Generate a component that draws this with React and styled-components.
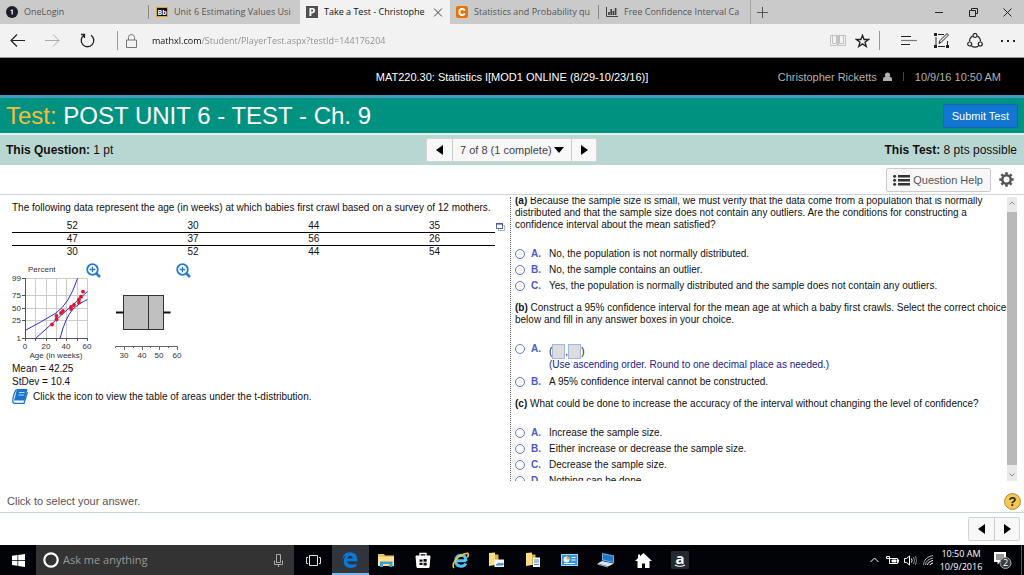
import React, { useState } from "react";
import styled, { createGlobalStyle } from "styled-components";

const GlobalStyle = createGlobalStyle`
  * {
    box-sizing: border-box;
  }

  body {
    margin: 0;
    background: #ffffff;
    color: #111111;
    font-family: "Liberation Sans", Arial, sans-serif;
    font-size: 10px;
    line-height: 12px;
  }

  button, input, select {
    font: inherit;
    color: inherit;
    margin: 0;
    padding: 0;
    border: 0;
    background: none;
    border-radius: 0;
  }

  svg {
    display: block;
    flex: none;
  }
`;

const PageUI = styled.div`
  display: flex;
  flex-direction: column;
  height: 100vh;
  overflow: hidden;
`;

/* ---------- browser ---------- */

const TabBarUI = styled.div`
  display: flex;
  height: 24px;
  flex: none;
  background: #cacaca;
  font-family: "Open Sans", "Noto Sans", sans-serif;
  font-size: 9px;
`;

const TabUI = styled.div`
  display: flex;
  align-items: center;
  flex: 0 1 150px;
  min-width: 0;
  gap: 6px;
  padding: 0 6px;
  background: ${(props) => (props.$active ? "#f2f2f2" : "transparent")};
  color: ${(props) => (props.$active ? "#111111" : "#555555")};
  position: relative;

  &::after {
    content: "";
    display: ${(props) => (props.$divider ? "block" : "none")};
    position: absolute;
    right: 1px;
    top: 5px;
    width: 1px;
    height: 14px;
    background: #888888;
  }
`;

const TabTitleUI = styled.button`
  flex: 1;
  min-width: 0;
  overflow: hidden;
  white-space: nowrap;
  text-align: left;
`;

const PlainButtonUI = styled.button`
  display: flex;
  align-items: center;
  justify-content: center;
`;

const NewTabUI = styled(PlainButtonUI)`
  width: 24px;
  border-left: 1px solid #a5a5a5;
`;

const WindowButtonsUI = styled.div`
  display: flex;
  margin-left: auto;
`;

const BrowserButtonUI = styled(PlainButtonUI)`
  width: ${(props) => props.$width || "34px"};
`;

const NavBarUI = styled.div`
  display: flex;
  align-items: stretch;
  height: 34px;
  flex: none;
  background: #f2f2f2;
  border-bottom: 1px solid #999999;
`;

const NavDividerUI = styled.div`
  width: 1px;
  height: 19px;
  align-self: center;
  background: #999999;
  margin: 0 ${(props) => props.$space};
`;

const AddressUI = styled.label`
  display: flex;
  align-items: center;
  flex: 1;
  gap: 15px;
`;

const AddressInputUI = styled.input`
  flex: 1;
  min-width: 0;
  outline: 0;
  font-family: "Open Sans", "Noto Sans", sans-serif;
  font-size: 9px;
  line-height: 16px;
  color: transparent;
  background: linear-gradient(90deg, #111111 49px, #8c8c8c 49px);
  -webkit-background-clip: text;
  background-clip: text;
`;

/* ---------- test player ---------- */

const CourseBarUI = styled.header`
  display: grid;
  grid-template-columns: 1fr auto 1fr;
  align-items: center;
  height: 40px;
  flex: none;
  padding: 0 23px;
  background: #000000;
  border-bottom: 3px solid #3f9bbf;
  color: #ffffff;
  font-size: 11px;
`;

const CourseNameUI = styled.div`
  grid-column: 2;
`;

const AccountUI = styled.div`
  display: flex;
  align-items: center;
  justify-content: flex-end;
  gap: 6px;
  color: #b0b0b0;
`;

const AccountBarUI = styled.span`
  width: 1px;
  height: 9px;
  background: #4d4335;
  margin: 0 5px;
`;

const TitleBarUI = styled.div`
  display: flex;
  align-items: center;
  justify-content: space-between;
  height: 37px;
  flex: none;
  padding: 0 6px;
  background: #009280;
  border-bottom: 2px solid #e3f1ef;
`;

const TitleUI = styled.h1`
  margin: 0;
  font-size: 24px;
  line-height: 28px;
  font-weight: normal;
  color: #ffffff;

  span {
    color: #f8bd37;
  }
`;

const SubmitUI = styled.button`
  height: 24px;
  padding: 0 8px;
  border: 1px solid #1167bd;
  border-radius: 2px;
  background: #1276d2;
  color: #ffffff;
  font-size: 11px;
`;

const InfoBarUI = styled.div`
  display: grid;
  grid-template-columns: 1fr auto 1fr;
  align-items: center;
  height: 30px;
  flex: none;
  padding: 0 7px 0 6px;
  background: #b9d7d2;
  font-size: 12px;
  line-height: 14px;
`;

const PointsUI = styled.div`
  text-align: ${(props) => props.$align};
`;

const ButtonGroupUI = styled.div`
  display: flex;
  height: 24px;
  border: 1px solid #d3d3d3;
  border-radius: 2px;
  background: #f8f8f8;
  color: #444444;

  > * + * {
    border-left: 1px solid #cccccc;
  }
`;

const ArrowButtonUI = styled(PlainButtonUI)`
  width: 25px;
  color: #000000;
`;

const QuestionPickerUI = styled.label`
  display: grid;
  align-items: center;

  > * {
    grid-area: 1 / 1;
  }

  svg {
    justify-self: end;
    margin-right: 7px;
    pointer-events: none;
    color: #000000;
  }
`;

const QuestionSelectUI = styled.select`
  appearance: none;
  width: 118px;
  height: 22px;
  padding-left: 7px;
  font-size: 11px;
`;

const HelpBarUI = styled.div`
  display: flex;
  align-items: center;
  justify-content: flex-end;
  gap: 8px;
  height: 30px;
  flex: none;
  padding: 0 10px 0 9px;
  border-bottom: 1px solid #cbd2e0;
`;

const HelpButtonUI = styled(PlainButtonUI)`
  height: 24px;
  gap: 3px;
  padding: 0 7px 0 6px;
  border: 1px solid #cccccc;
  border-radius: 2px;
  background: #f7f7f7;
  color: #555555;
  font-size: 11px;
`;

const WorkAreaUI = styled.main`
  display: flex;
  flex: 1;
  min-height: 0;
  padding: 2px 7px 0 12px;
`;

const QuestionUI = styled.section`
  flex: 494;
  min-width: 0;
  padding-top: 5px;
`;

const AnswersUI = styled.section`
  flex: 493;
  min-width: 0;
  margin-left: 5px;
  padding-left: 4px;
  border-left: 1px dotted #666666;
  overflow: hidden;
`;

const ScrolledUI = styled.div`
  margin-top: -2px;
`;

const LineUI = styled.p`
  margin: 0;
  line-height: ${(props) => (props.$loose ? "13px" : "12px")};
`;

const TableRowUI = styled.div`
  display: flex;
  align-items: flex-start;
  gap: 1px;
  padding-top: 6px;
`;

const DataTableUI = styled.table`
  flex: 1;
  table-layout: fixed;
  border-collapse: collapse;

  td {
    width: 25%;
    padding: 0;
    line-height: 12px;
    text-align: center;
  }

  tr + tr td {
    border-top: 1px solid #000000;
  }
`;

const PopupUI = styled(PlainButtonUI)`
  margin-top: 3px;
`;

const ChartsUI = styled.div`
  display: flex;
  gap: 8px;
  margin: 2px 0 0 -4px;

  text {
    font-size: 8px;
    fill: #333333;
  }
`;

const TableLinkUI = styled.a`
  display: flex;
  align-items: center;
  gap: 5px;
  margin-top: 1px;
  color: inherit;
  text-decoration: none;
`;

const ChoicesUI = styled.div`
  margin: 15px 0 8px;
`;

const ChoiceUI = styled.label`
  display: grid;
  grid-template-columns: 10px 10px 1fr;
  column-gap: 6px;
  min-height: 16px;
  line-height: 16px;
`;

const RadioUI = styled.input`
  appearance: none;
  width: 10px;
  height: 10px;
  margin-top: 3px;
  border: 1px solid #6078d8;
  border-radius: 50%;

  &:checked {
    background: radial-gradient(#3f55c4 40%, transparent 45%);
  }
`;

const LetterUI = styled.span`
  font-weight: bold;
  color: #4a5ac8;
`;

const ChoiceTextUI = styled.span`
  padding-left: 2px;
`;

const IntervalUI = styled.span`
  display: flex;
  align-items: center;
  height: 18px;
  padding-top: 3px;
`;

const BlankUI = styled.input`
  width: 13px;
  height: 15px;
  border: 1px solid #9db8e8;
  background: #dddddd;
`;

const HintUI = styled.span`
  display: block;
  line-height: 12px;
  padding-bottom: 3px;
  color: #1a1a8c;
`;

const ScrollbarUI = styled.div`
  display: flex;
  flex-direction: column;
  width: 10px;
  flex: none;
  background: #e9e9e9;

  svg {
    margin: 4px 2px;
  }
`;

const ThumbUI = styled.div`
  flex: 1;
  margin: 3px 0 4px;
  background: #b9b9b9;
`;

const StatusUI = styled.div`
  display: flex;
  align-items: center;
  justify-content: space-between;
  height: 32px;
  flex: none;
  padding: 9px 3px 0 7px;
  border-bottom: 1px solid #cbd2e0;
  color: #555555;
  font-size: 11px;
`;

const PagerUI = styled.div`
  display: flex;
  justify-content: flex-end;
  align-items: center;
  height: 32px;
  flex: none;
  padding-right: 4px;
`;

/* ---------- taskbar ---------- */

const TaskbarUI = styled.footer`
  display: flex;
  height: 30px;
  flex: none;
  background: #020308;
  color: #ffffff;
  font-family: "Open Sans", "Noto Sans", sans-serif;
`;

const TaskButtonUI = styled(PlainButtonUI)`
  min-width: ${(props) => props.$width || "0"};
  background: ${(props) => (props.$active ? "#30353c" : "none")};
  box-shadow: ${(props) => (props.$active ? "inset 0 -2px #76b9ed" : "none")};
`;

const CortanaUI = styled.label`
  display: flex;
  align-items: center;
  flex: 0 1 258px;
  gap: 4px;
  padding: 0 11px 0 7px;
  background: #333333;
`;

const CortanaInputUI = styled.input`
  flex: 1;
  min-width: 0;
  font-size: 11px;
  line-height: 18px;

  &::placeholder {
    color: #999999;
    opacity: 1;
  }
`;

const AppsUI = styled.nav`
  display: grid;
  grid-template-columns: repeat(10, 1fr);
  width: 366px;
`;

const TrayUI = styled.div`
  display: flex;
  align-items: center;
  margin-left: auto;
  padding-right: 2px;
`;

const ClockUI = styled.div`
  width: 48px;
  text-align: center;
  font-size: 9px;
  line-height: 13px;
`;

const ShowDesktopUI = styled.div`
  width: 1px;
  align-self: stretch;
  background: #555555;
`;

/* ---------- drawings ---------- */

const Stroke = ({ w, h, d, color = "#222222", width = 1, children }) => (
  <svg width={w} height={h} viewBox={`0 0 ${w} ${h}`} fill="none" stroke={color} strokeWidth={width}>
    <path d={d} />
    {children}
  </svg>
);

const Triangle = ({ dir }) => {
  const d = { left: "M8 0v10L1 5z", right: "M1 0v10l7-5z", down: "M0 2h10L5 8z" }[dir];
  return (
    <svg width={dir === "down" ? 10 : 9} height="10" fill="currentColor">
      <path d={d} />
    </svg>
  );
};

const OneLoginIcon = () => (
  <svg width="12" height="12">
    <circle cx="6" cy="6" r="6" fill="#1c1f2a" />
    <path d="M4.6 4.2L6 3.4h.8V8.6H5.6V4.8l-1 .3z" fill="#fff" />
  </svg>
);

const BlackboardIcon = () => (
  <svg width="12" height="12">
    <rect x="0.5" y="1.5" width="11" height="9" fill="#111" stroke="#e0a526" />
    <text x="6" y="8.6" fontSize="7" fontWeight="bold" fill="#fff" textAnchor="middle">Bb</text>
  </svg>
);

const PearsonIcon = () => (
  <svg width="12" height="12">
    <rect width="12" height="12" fill="#505050" />
    <text x="6" y="10" fontSize="11" fontWeight="bold" fill="#fff" textAnchor="middle">P</text>
  </svg>
);

const CheggIcon = () => (
  <svg width="12" height="12">
    <rect width="12" height="12" rx="2" fill="#eb7100" />
    <path d="M8.8 4.6Q8.2 3 6.2 3 3.3 3 3.3 6t2.9 3q2 0 2.6-1.6" fill="none" stroke="#fff" strokeWidth="2" />
  </svg>
);

const BarsIcon = () => (
  <svg width="12" height="12" fill="none" stroke="#444">
    <path d="M.5 1v9.5H12" />
    <path d="M3 9V6M5.2 9V3M7.4 9V5M9.6 9V2" strokeWidth="1.700" />
  </svg>
);

const UserIcon = () => (
  <svg width="9" height="10" fill="#b0b0b0">
    <circle cx="4.500" cy="3" r="2.600" />
    <path d="M0 9V7q0-2 2-2h5q2 0 2 2v2z" />
  </svg>
);

const ListIcon = () => (
  <svg width="17" height="12" fill="#333">
    <path d="M5 1h12v2.500H5zM5 5h12v2.500H5zM5 9h12v2.500H5z" />
    <circle cx="1.600" cy="2.200" r="1.500" />
    <circle cx="1.600" cy="6.200" r="1.500" />
    <circle cx="1.600" cy="10.200" r="1.500" />
  </svg>
);

const GearIcon = () => (
  <svg width="15" height="15" viewBox="0 0 15 15">
    <g stroke="#555" fill="none">
      <circle cx="7.5" cy="7.500" r="4.200" strokeWidth="2.400" />
      <path
        strokeWidth="2.600"
        d="M7.500 0.300v2.500M7.500 12.200v2.500M.3 7.500h2.500M12.200 7.500h2.500M2.400 2.400l1.800 1.800M10.800 10.800l1.800 1.800M2.400 12.600l1.800-1.800M10.800 4.200l1.800-1.800"
      />
    </g>
  </svg>
);

const PopupIcon = () => (
  <svg width="9" height="8" fill="#fff">
    <rect x="2.500" y="2.500" width="6" height="5" stroke="#a9b3dc" />
    <rect x=".5" y=".5" width="6" height="5" stroke="#5a68b4" />
    <path d="M0 .8h7" stroke="#4a58a8" strokeWidth="1.600" />
  </svg>
);

const BookIcon = () => (
  <svg width="16" height="15">
    <path d="M5 0h10.500l-3 11.500H2z" fill="#1b72d0" />
    <path d="M4.500.5Q1 5 .8 12q0 2.300 2 2.300H12L15.500 3" fill="none" stroke="#1b72d0" strokeWidth="1.300" />
    <path d="M7 3.500h5.500M6.400 6h5.500" stroke="#bcd8f5" />
  </svg>
);

const Magnifier = ({ x, y }) => (
  <g fill="none" stroke="#2678d8" transform={`translate(${x} ${y})`}>
    <circle r="5.300" strokeWidth="1.800" />
    <path d="M-2.800 0h5.600M0-2.800v5.600" strokeWidth="1.300" />
    <path d="M3.800 3.800L7.500 7.500" strokeWidth="2.600" />
  </g>
);

const POINTS = [
  [44, 64.5], [48.500, 59.500], [48.500, 56], [53, 53], [55, 51], [63, 49],
  [63, 47], [66, 45], [71, 42.700], [71, 39.500], [73, 36.700], [75, 31.700],
];

const ProbabilityPlot = () => (
  <svg width="95" height="102" role="img" aria-label="Normal probability plot">
    <path
      d="M27.500 18.500v60M38.500 18.500v60M48.500 18.500v60M58.500 18.500v60M69.500 18.500v60M79.500 18.500v60M17 18.500h62.500M17 35.500h62.500M17 48.500h62.500M17 60.500h62.500"
      stroke="#cccccc"
    />
    <path
      d="M17.500 18v63M14 78.500h65.500M14 18.500h3M14 35.500h3M14 48.500h3M14 60.500h3M27.500 78v3M38.500 78v3M48.500 78v3M58.500 78v3M69.500 78v3M79.500 78v3"
      stroke="#555"
    />
    <g fill="none" stroke="#2c2ce8">
      <path d="M17 70.500Q35 61 48 53Q61 44 69.500 18.500" />
      <path d="M27.500 78.500L79.500 31.500" />
      <path d="M52 78.500Q57 58 65 49Q71 43 79.500 39.500" />
    </g>
    {POINTS.map(([x, y]) => (
      <circle key={`${x}-${y}`} cx={x} cy={y} r="1.900" fill="#ee1020" />
    ))}
    <text x="20" y="12">Percent</text>
    <g textAnchor="end">
      <text x="13" y="21">99</text>
      <text x="13" y="38">75</text>
      <text x="13" y="51">50</text>
      <text x="13" y="63">25</text>
      <text x="13" y="81">1</text>
    </g>
    <g textAnchor="middle">
      <text x="17" y="89">0</text>
      <text x="38" y="89">20</text>
      <text x="58" y="89">40</text>
      <text x="79" y="89">60</text>
      <text x="48" y="98">Age (in weeks)</text>
    </g>
    <Magnifier x={84.5} y={9.5} />
  </svg>
);

const BoxPlot = () => (
  <svg width="82" height="102" role="img" aria-label="Box plot">
    <rect x="12.500" y="35.500" width="40" height="34" fill="#c0c0c0" stroke="#333" />
    <path d="M37.500 35.500v34" stroke="#333" />
    <path d="M5 52.500h7.500M52.500 52.500h7" stroke="#111" strokeWidth="2" />
    <path
      d="M4.500 88v-1.500h62V90M13.500 86v4M22.500 86v2M31.500 86v4M39.500 86v2M48.500 86v4M57.500 86v2"
      fill="none"
      stroke="#666"
    />
    <g textAnchor="middle">
      <text x="13" y="98">30</text>
      <text x="31" y="98">40</text>
      <text x="48" y="98">50</text>
      <text x="66" y="98">60</text>
    </g>
    <Magnifier x={71.5} y={9.5} />
  </svg>
);

const HelpIcon = () => (
  <svg width="17" height="17">
    <circle cx="8.500" cy="8.500" r="7.900" fill="#f9c74d" stroke="#a8883c" />
    <text x="8.500" y="13" fontSize="13" fontWeight="bold" fill="#222" textAnchor="middle">?</text>
  </svg>
);

const EdgeIcon = () => (
  <svg width="16" height="16">
    <path
      d="M.3 7.200Q1.300.3 8 .3q6.800 0 7.300 7.200v1.700H5.200q.3 3.400 4.600 3.400 2.600 0 4.500-1.200v3.200q-2.200 1.300-5.300 1.300-7.300 0-7.300-6.600 0-4.300 4-6.200Q1.800 4 .3 7.200zM5.300 6.400h5.500Q10.600 3.800 8.100 3.800 5.600 3.800 5.300 6.400z"
      fill="#0a7ad8"
    />
  </svg>
);

const ExplorerIcon = () => (
  <svg width="17" height="15">
    <path d="M0 1h6l1 1.500h9V13H0z" fill="#e9c35c" />
    <path d="M0 4h16v9H0z" fill="#fbe190" />
    <path d="M2 14V8.500h12.500V14h-3v-3H5v3z" fill="#3b9fd8" />
  </svg>
);

const StoreIcon = () => (
  <svg width="16" height="16" fill="none" stroke="#fff">
    <path d="M5 4V1.500h6V4" strokeWidth="1.300" />
    <path d="M1 4h14l-1 11.500H2z" fill="#fff" />
    <path d="M4.500 7.500h3v2.300h-3zM8.500 7h3.200v2.800H8.500zM4.500 10.800h3V13h-3zM8.500 10.800h3.200v2.700H8.500z" fill="#111" stroke="none" />
  </svg>
);

const IeIcon = () => (
  <svg width="17" height="17" fill="none">
    <path d="M14.200 8.700H4.200M14 9.200Q14 3.300 9 3.300 3.800 3.500 3.800 8.900t5.200 5.300q3.800 0 4.800-2.700" stroke="#55c3f0" strokeWidth="3" />
    <path d="M2 16Q-.5 13 4 7.500T15.500 1.200Q17 2.500 15.500 5.500" stroke="#f3c533" strokeWidth="1.600" />
  </svg>
);

const FolderIcon = ({ sheet }) => (
  <svg width="17" height="16">
    <path d="M1 1l6-.5V13l-6 1z" fill="#f8dc86" />
    <path d="M7 2.500h3.500V13H7z" fill="#dcb14a" />
    {sheet ? (
      <path d="M8 5.500h7V15H8z" fill="#f3f7fb" />
    ) : (
      <path d="M6.500 7.500h9.500V15H6.500z" fill="#f3f7fb" />
    )}
    <path d={sheet ? "M9 8h5M9 10h5M9 12.500h5" : "M8 13l3-2 2 1 2-1v2z"} stroke="#4c8fc4" fill="#4c8fc4" />
  </svg>
);

const PanelIcon = () => (
  <svg width="17" height="13">
    <rect x=".5" y=".5" width="16" height="11" fill="#2f96dd" stroke="#9fd4f5" />
    <circle cx="5.500" cy="5.500" r="3" fill="#e8f5ff" />
    <path d="M5.500 5.500v-3a3 3 0 013 3z" fill="#f2a63a" />
    <path d="M10.500 3.500h4M10.500 6h4M3 9.500h11" stroke="#fff" />
  </svg>
);

const LaptopIcon = () => (
  <svg width="18" height="16">
    <path d="M5 1l12 2.500V11L5 8.500z" fill="#64b5ee" />
    <path d="M6 2.200l10 2.100v5.500L6 7.500z" fill="#2277c5" />
    <path d="M5 9l12 2.500-6 3-10.500-3z" fill="#dbe4ec" />
    <path d="M.5 11.500L11 14.500v1L.5 12.800z" fill="#8fa0b0" />
  </svg>
);

const HouseIcon = () => (
  <svg width="17" height="15" fill="#fff">
    <path d="M8.500 0L17 8h-2.500v7H10v-4.500H7V15H2.500V8H0L3 5.100V1.500h2v1.800z" />
  </svg>
);

const AmazonIcon = () => (
  <svg width="18" height="18">
    <rect width="18" height="18" rx="1" fill="#242932" />
    <text x="9" y="12.500" fontSize="15" fontWeight="bold" fill="#fff" textAnchor="middle">a</text>
    <path d="M4 14q5 2.500 10 0" fill="none" stroke="#fff" strokeWidth="1.200" />
  </svg>
);

const NoticeIcon = () => (
  <svg width="20" height="20">
    <path d="M1 2h12v10H7l-2.500 2.500V12H1z" fill="#fff" />
    <path d="M3 5h8M3 7h8M3 9h6" stroke="#333" />
    <circle cx="12.500" cy="13" r="5.500" fill="#3c3c3c" stroke="#aaa" />
    <text x="12.500" y="16.200" fontSize="9" fill="#fff" textAnchor="middle">2</text>
  </svg>
);

/* ---------- data ---------- */

const TABS = [
  { title: "OneLogin", icon: <OneLoginIcon />, divider: true },
  { title: "Unit 6 Estimating Values Usi", icon: <BlackboardIcon /> },
  { title: "Take a Test - Christophe", icon: <PearsonIcon />, active: true },
  { title: "Statistics and Probability qu", icon: <CheggIcon />, divider: true },
  { title: "Free Confidence Interval Ca", icon: <BarsIcon /> },
];

const AGES = [
  [52, 30, 44, 35],
  [47, 37, 56, 26],
  [30, 52, 44, 54],
];

const APPS = [
  ["Edge", <EdgeIcon />],
  ["File Explorer", <ExplorerIcon />],
  ["Store", <StoreIcon />],
  ["Internet Explorer", <IeIcon />],
  ["Pictures", <FolderIcon />],
  ["Documents", <FolderIcon sheet />],
  ["Control Panel", <PanelIcon />],
  ["This PC", <LaptopIcon />],
  ["Home", <HouseIcon />],
  ["Amazon", <AmazonIcon />],
];

const Choices = ({ name, options }) => {
  const [picked, setPicked] = useState(null);

  return (
    <ChoicesUI role="radiogroup">
      {options.map((option, i) => {
        const letter = "ABCD"[i];
        return (
          <ChoiceUI key={letter}>
            <RadioUI type="radio" name={name} checked={picked === letter} onChange={() => setPicked(letter)} />
            <LetterUI>{letter}.</LetterUI>
            <ChoiceTextUI>{option}</ChoiceTextUI>
          </ChoiceUI>
        );
      })}
    </ChoicesUI>
  );
};

const Browser = () => (
  <>
    <TabBarUI>
      {TABS.map((tab) => (
        <TabUI key={tab.title} $active={tab.active} $divider={tab.divider}>
          {tab.icon}
          <TabTitleUI>{tab.title}</TabTitleUI>
          {tab.active && (
            <PlainButtonUI aria-label="Close tab">
              <Stroke w={12} h={9} d="M2 .5l8 8M10 .5l-8 8" color="#444" />
            </PlainButtonUI>
          )}
        </TabUI>
      ))}
      <NewTabUI aria-label="New tab">
        <Stroke w={11} h={11} d="M0 5.500h11M5.500 0v11" color="#555" />
      </NewTabUI>
      <WindowButtonsUI>
        <BrowserButtonUI aria-label="Minimize"><Stroke w={9} h={9} d="M0 4.500h8" /></BrowserButtonUI>
        <BrowserButtonUI aria-label="Restore"><Stroke w={9} h={9} d="M.5 2.500h6v6h-6zM2.500 2V.5h6v5H7" /></BrowserButtonUI>
        <BrowserButtonUI aria-label="Close"><Stroke w={9} h={9} d="M.5.5l8 8M8.500.5l-8 8" /></BrowserButtonUI>
      </WindowButtonsUI>
    </TabBarUI>
    <NavBarUI>
      <BrowserButtonUI $width="35px" aria-label="Back"><Stroke w={15} h={13} d="M.7 6.500H15M7 .5l-6 6 6 6" width={1.2} /></BrowserButtonUI>
      <BrowserButtonUI $width="35px" aria-label="Forward"><Stroke w={15} h={13} d="M0 6.500h14.300M8 .5l6 6-6 6" color="#aaa" /></BrowserButtonUI>
      <BrowserButtonUI $width="35px" aria-label="Refresh"><Stroke w={15} h={15} d="M4 2.200a6.300 6.300 0 107 0M1 1.500h3.500V5" width={1.3} /></BrowserButtonUI>
      <NavDividerUI $space="8px 0 12px" />
      <AddressUI>
        <Stroke w={11} h={14} d="M.5 6h10v7.500H.5zM2.500 6V3.500a3 3 0 016 0V6" color="#777" />
        <AddressInputUI aria-label="Address" defaultValue="mathxl.com/Student/PlayerTest.aspx?testId=144176204" />
      </AddressUI>
      <BrowserButtonUI $width="25px" aria-label="Reading view">
        <Stroke w={16} h={13} d="M.5 1.500h7v10h-7zM8.500 1.500h7v10h-7zM2.500.5v9h4v-9M9.500.5v9h4v-9" color="#c2c2c2" />
      </BrowserButtonUI>
      <BrowserButtonUI $width="25px" aria-label="Favorite">
        <Stroke w={15} h={14} d="M7.500 1.300l1.600 4.200h4.400L10 8.200l1.300 4.300-3.800-2.600-3.800 2.600L5 8.200 1.500 5.500h4.400z" width={1.3} />
      </BrowserButtonUI>
      <NavDividerUI $space="12px 0 4px" />
      <BrowserButtonUI $width="33px" aria-label="Hub">
        <Stroke w={16} h={11} d="M0 1.500h10M0 9.500h9" width={1.2}><path d="M0 5.500h16" stroke="#777" /></Stroke>
      </BrowserButtonUI>
      <BrowserButtonUI $width="33px" aria-label="Web note">
        <Stroke w={15} h={15} d="M2 4v8M4 13.500h7M13.500 8v4M4 1.500h6">
          <path d="M5 10.500l1-3 7-7 1.500 1.500-7 7z" />
          <path d="M0 1.500h3M0 13.500h3M12 13.500h3" strokeWidth="3" />
        </Stroke>
      </BrowserButtonUI>
      <BrowserButtonUI $width="33px" aria-label="Share">
        <Stroke w={16} h={15} d="M5.500 3Q2.500 5 2.500 8.500M10.500 3q3 2 3 5.500M4.500 13.300q3.500 1.700 7 0" width={1.2}>
          <circle cx="8" cy="2.500" r="2" />
          <circle cx="2.700" cy="11" r="2" />
          <circle cx="13.300" cy="11" r="2" />
        </Stroke>
      </BrowserButtonUI>
      <BrowserButtonUI $width="33px" aria-label="More"><Stroke w={14} h={2} d="M0 1h2M6 1h2M12 1h2" width={2} /></BrowserButtonUI>
    </NavBarUI>
  </>
);

const Question = () => (
  <QuestionUI>
    <LineUI>
      The following data represent the age (in weeks) at which babies first crawl based on a survey of 12 mothers.
    </LineUI>
    <TableRowUI>
      <DataTableUI>
        <tbody>
          {AGES.map((row, i) => (
            <tr key={i}>
              {row.map((age, j) => <td key={j}>{age}</td>)}
            </tr>
          ))}
        </tbody>
      </DataTableUI>
      <PopupUI aria-label="Open data"><PopupIcon /></PopupUI>
    </TableRowUI>
    <ChartsUI>
      <ProbabilityPlot />
      <BoxPlot />
    </ChartsUI>
    <LineUI $loose>Mean = 42.25</LineUI>
    <LineUI $loose>StDev = 10.4</LineUI>
    <TableLinkUI href="#t-table">
      <BookIcon /> Click the icon to view the table of areas under the t-distribution.
    </TableLinkUI>
  </QuestionUI>
);

const Answers = () => (
  <AnswersUI>
    <ScrolledUI>
      <LineUI>
        <b>(a)</b> Because the sample size is small, we must verify that the data come from a population that is
        normally distributed and that the sample size does not contain any outliers. Are the conditions for
        constructing a confidence interval about the mean satisfied?
      </LineUI>
      <Choices
        name="part-a"
        options={[
          "No, the population is not normally distributed.",
          "No, the sample contains an outlier.",
          "Yes, the population is normally distributed and the sample does not contain any outliers.",
        ]}
      />
      <LineUI>
        <b>(b)</b> Construct a 95% confidence interval for the mean age at which a baby first crawls. Select the
        correct choice below and fill in any answer boxes in your choice.
      </LineUI>
      <Choices
        name="part-b"
        options={[
          <>
            <IntervalUI>
              (<BlankUI aria-label="Lower bound" />,<BlankUI aria-label="Upper bound" />)
            </IntervalUI>
            <HintUI>(Use ascending order. Round to one decimal place as needed.)</HintUI>
          </>,
          "A 95% confidence interval cannot be constructed.",
        ]}
      />
      <LineUI>
        <b>(c)</b> What could be done to increase the accuracy of the interval without changing the level of
        confidence?
      </LineUI>
      <Choices
        name="part-c"
        options={[
          "Increase the sample size.",
          "Either increase or decrease the sample size.",
          "Decrease the sample size.",
          "Nothing can be done.",
        ]}
      />
    </ScrolledUI>
  </AnswersUI>
);

const Taskbar = () => (
  <TaskbarUI>
    <TaskButtonUI $width="36px" aria-label="Start">
      <svg width="13" height="13" fill="#fff">
        <path d="M0 1.800L5.500 1v5H0zM6.200.9L13 0v6H6.200zM0 6.800h5.500v5L0 11zM6.200 6.800H13V13l-6.800-1z" />
      </svg>
    </TaskButtonUI>
    <CortanaUI>
      <svg width="16" height="16"><circle cx="8" cy="8" r="6.700" fill="none" stroke="#fff" strokeWidth="2.200" /></svg>
      <CortanaInputUI aria-label="Search" placeholder="Ask me anything" />
      <Stroke w={9} h={13} d="M2.500.5h4v8h-4zM.5 6.500v4h8v-4M4.500 10.500V13" color="#aaa" />
    </CortanaUI>
    <TaskButtonUI $width="38px" aria-label="Task view">
      <Stroke w={15} h={11} d="M3.500.5h8v10h-8zM2 2.500H.5v6H2M13 2.500h1.500v6H13" color="#ddd" />
    </TaskButtonUI>
    <AppsUI>
      {APPS.map(([name, icon], i) => (
        <TaskButtonUI key={name} aria-label={name} $active={i === 0}>{icon}</TaskButtonUI>
      ))}
    </AppsUI>
    <TrayUI>
      <TaskButtonUI $width="18px" aria-label="Show hidden icons"><Stroke w={9} h={6} d="M.5 5l4-4 4 4" color="#fff" /></TaskButtonUI>
      <TaskButtonUI $width="18px" aria-label="Battery">
        <svg width="13" height="10" fill="none" stroke="#fff">
          <path d="M3.500 3.500h8v5h-8z" />
          <path d="M6 5h4v2H6zM12.500 4.500v3" fill="#fff" />
          <path d="M.5 1.500h3v2h-3z" />
        </svg>
      </TaskButtonUI>
      <TaskButtonUI $width="18px" aria-label="Volume">
        <Stroke w={13} h={11} d="M.5 3.500h2l3-2.500v9l-3-2.500h-2zM7.500 3.500q1 2 0 4" color="#fff">
          <path d="M9.500 2q2 3.500 0 7M11.500 1q2 4.500 0 9" stroke="#888" />
        </Stroke>
      </TaskButtonUI>
      <TaskButtonUI $width="18px" aria-label="Network">
        <Stroke w={11} h={11} d="M4.500 10Q5 6.500 10 5.500M7 10q.5-1.500 3-2" color="#fff">
          <path d="M.5 10Q1 2 10 .5M2.500 10Q3 4.500 10 3" stroke="#aaa" />
        </Stroke>
      </TaskButtonUI>
      <ClockUI>10:50 AM<br />10/9/2016</ClockUI>
      <TaskButtonUI $width="36px" aria-label="Notifications"><NoticeIcon /></TaskButtonUI>
      <ShowDesktopUI />
    </TrayUI>
  </TaskbarUI>
);

export const App = () => (
  <PageUI>
    <GlobalStyle />
    <Browser />
    <CourseBarUI>
      <CourseNameUI>MAT220.30: Statistics I[MOD1 ONLINE (8/29-10/23/16)]</CourseNameUI>
      <AccountUI>
        Christopher Ricketts <UserIcon /> <AccountBarUI /> 10/9/16 10:50 AM
      </AccountUI>
    </CourseBarUI>
    <TitleBarUI>
      <TitleUI><span>Test:</span> POST UNIT 6 - TEST - Ch. 9</TitleUI>
      <SubmitUI>Submit Test</SubmitUI>
    </TitleBarUI>
    <InfoBarUI>
      <PointsUI $align="left"><b>This Question:</b> 1 pt</PointsUI>
      <ButtonGroupUI>
        <ArrowButtonUI aria-label="Previous question"><Triangle dir="left" /></ArrowButtonUI>
        <QuestionPickerUI>
          <QuestionSelectUI aria-label="Question">
            <option>7 of 8 (1 complete)</option>
          </QuestionSelectUI>
          <Triangle dir="down" />
        </QuestionPickerUI>
        <ArrowButtonUI aria-label="Next question"><Triangle dir="right" /></ArrowButtonUI>
      </ButtonGroupUI>
      <PointsUI $align="right"><b>This Test:</b> 8 pts possible</PointsUI>
    </InfoBarUI>
    <HelpBarUI>
      <HelpButtonUI><ListIcon /> Question Help</HelpButtonUI>
      <PlainButtonUI aria-label="Settings"><GearIcon /></PlainButtonUI>
    </HelpBarUI>
    <WorkAreaUI>
      <Question />
      <Answers />
      <ScrollbarUI>
        <Stroke w={6} h={4} d="M.5 3.500L3 1l2.500 2.500" color="#888" />
        <ThumbUI />
        <Stroke w={6} h={4} d="M.5.5L3 3 5.500.5" color="#888" />
      </ScrollbarUI>
    </WorkAreaUI>
    <StatusUI>
      Click to select your answer.
      <PlainButtonUI aria-label="Help"><HelpIcon /></PlainButtonUI>
    </StatusUI>
    <PagerUI>
      <ButtonGroupUI>
        <ArrowButtonUI aria-label="Previous"><Triangle dir="left" /></ArrowButtonUI>
        <ArrowButtonUI aria-label="Next"><Triangle dir="right" /></ArrowButtonUI>
      </ButtonGroupUI>
    </PagerUI>
    <Taskbar />
  </PageUI>
);

export default App;
